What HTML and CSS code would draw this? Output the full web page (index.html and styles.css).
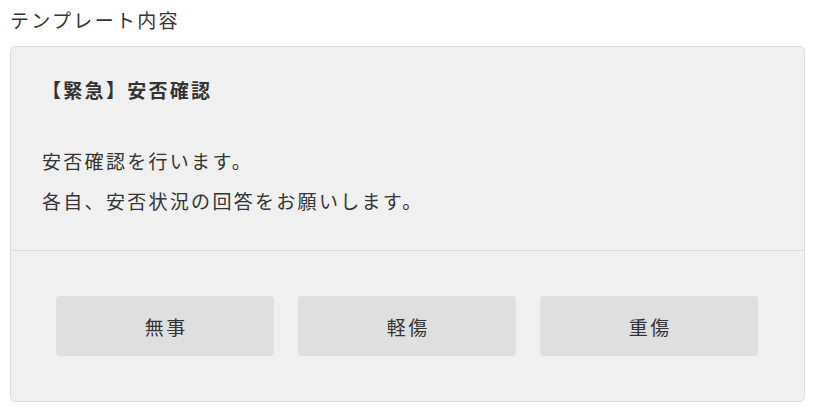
FILE: index.html
```html
<!DOCTYPE html>
<html lang="ja">
<head>
  <meta charset="UTF-8" />
  <meta name="viewport" content="width=device-width, initial-scale=1.0" />
  <title>テンプレート内容</title>
  <link rel="stylesheet" href="styles.css">
</head>
<body>
  <p class="section-label">テンプレート内容</p>

  <div class="template-card">
    <div class="template-body">
      <h2 class="template-title">【緊急】安否確認</h2>
      <p class="template-text">安否確認を行います。<br>各自、安否状況の回答をお願いします。</p>
    </div>

    <div class="template-actions">
      <button class="answer-btn">無事</button>
      <button class="answer-btn">軽傷</button>
      <button class="answer-btn">重傷</button>
    </div>
  </div>
</body>
</html>
```

FILE: styles.css
```css
:root {
  --card-bg: #f0f0f0;
  --border: #dcdcdc;
  --btn-bg: #dfdfdf;
  --text: #333333;
}

* {
  box-sizing: border-box;
  margin: 0;
  padding: 0;
}

body {
  background: #ffffff;
  color: var(--text);
  font-family: "Noto Sans CJK JP", "Noto Sans", sans-serif;
  font-size: 19px;
  letter-spacing: 2.3px;
  padding: 10px;
}

.section-label {
  line-height: 20px;
  margin-bottom: 16px;
}

.template-card {
  background-color: var(--card-bg);
  border: 1px solid var(--border);
  border-radius: 5px;
}

.template-body {
  padding: 31px 31px 29px;
  border-bottom: 1px solid var(--border);
}

.template-title {
  font-size: 19px;
  font-weight: 700;
  line-height: 24px;
  margin-bottom: 39px;
}

.template-text {
  line-height: 40px;
}

.template-actions {
  display: flex;
  gap: 24px;
  padding: 45px 46px 45px 45px;
}

.answer-btn {
  flex: 1;
  height: 60px;
  border: none;
  border-radius: 4px;
  background-color: var(--btn-bg);
  color: var(--text);
  font-family: inherit;
  font-size: 19px;
  letter-spacing: 2.3px;
  text-indent: 2.3px;
  cursor: pointer;
}
```
